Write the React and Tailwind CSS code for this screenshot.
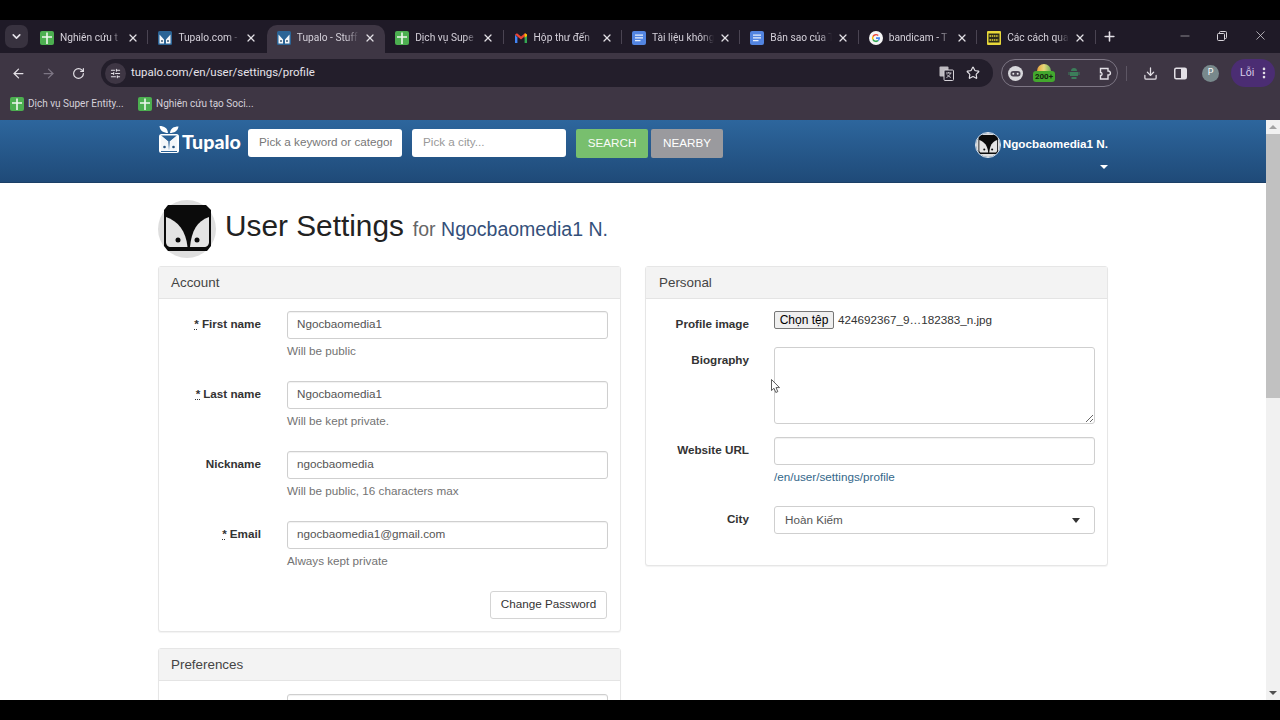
import { ArrowLeft, ArrowRight, RotateCw, Star, Download, MoreVertical, Plus, X, Minus, ChevronDown, SlidersHorizontal } from 'lucide-react'

const SheetIcon = () => (
  <svg width="14" height="14" viewBox="0 0 14 14" className="shrink-0">
    <rect width="14" height="14" rx="2" fill="#4caf50" />
    <path d="M2 5.200h4.200V1.500h1.600v3.700H12v1.500H7.800V13H6.200V6.700H2z" fill="#eef7ee" />
  </svg>
)

const TupaloIcon = () => (
  <svg width="14" height="14" viewBox="0 0 14 14" className="shrink-0">
    <rect width="14" height="14" rx="1.500" fill="#2b6496" />
    <path d="M1.500 3.500L6 8.500V12.500H1.500zM12.500 3.500L8 8.500V12.500H12.500z" fill="#f3f6f9" />
    <circle cx="4" cy="10" r="0.900" fill="#2b4a66" />
    <circle cx="10" cy="10" r="0.900" fill="#2b4a66" />
  </svg>
)

const GmailIcon = () => (
  <svg width="14" height="14" viewBox="0 0 14 14" className="shrink-0">
    <path d="M1 3.500V12h2.400V6.500z" fill="#4285f4" />
    <path d="M13 3.500V12h-2.400V6.500z" fill="#34a853" />
    <path d="M1 3.500L3 2.300 7 5.600 11 2.300 13 3.500 7 8.600z" fill="#ea4335" />
    <path d="M11 2.300L13 3.500V5L10.600 6.800V3z" fill="#fbbc04" />
  </svg>
)

const DocIcon = () => (
  <svg width="14" height="14" viewBox="0 0 14 14" className="shrink-0">
    <rect width="14" height="14" rx="2" fill="#5284e0" />
    <path d="M3 3.500h8v1.300H3zM3 6.200h8v1.300H3zM3 8.900h5.500v1.300H3z" fill="#e8effb" />
  </svg>
)

const GoogleIcon = () => (
  <svg width="14" height="14" viewBox="0 0 14 14" className="shrink-0">
    <circle cx="7" cy="7" r="7" fill="#f5f5f5" />
    <path d="M7 3a4 4 0 0 1 2.700 1L8.800 5a2.700 2.700 0 0 0-4.200 1L3.400 5A4 4 0 0 1 7 3z" fill="#ea4335" />
    <path d="M3.400 5l1.200 1a2.700 2.700 0 0 0 0 2L3.400 9a4 4 0 0 1 0-4z" fill="#fbbc04" />
    <path d="M3.400 9l1.200-1a2.700 2.700 0 0 0 4 1.100l1.100 1A4 4 0 0 1 3.400 9z" fill="#34a853" />
    <path d="M11 6.300V7.600a4 4 0 0 1-1.300 2.500l-1.100-1a2 2 0 0 0 .8-1.200H7V6.300z" fill="#4285f4" />
  </svg>
)

const ChoLonIcon = () => (
  <svg width="14" height="14" viewBox="0 0 14 14" className="shrink-0">
    <rect width="14" height="14" rx="1" fill="#e8d83a" />
    <rect x="1.500" y="2.500" width="11" height="9" fill="#2a2a1a" />
    <path d="M2.500 5h9M2.500 9h9" stroke="#e8d83a" strokeWidth="1.300" strokeDasharray="1.500 .7" />
  </svg>
)

const tabs = [
  { icon: SheetIcon, title: 'Nghiên cứu t' },
  { icon: TupaloIcon, title: 'Tupalo.com -' },
  { icon: TupaloIcon, title: 'Tupalo - Stuff', active: true },
  { icon: SheetIcon, title: 'Dịch vụ Supe' },
  { icon: GmailIcon, title: 'Hộp thư đến' },
  { icon: DocIcon, title: 'Tài liệu không' },
  { icon: DocIcon, title: 'Bản sao của T' },
  { icon: GoogleIcon, title: 'bandicam - T' },
  { icon: ChoLonIcon, title: 'Các cách qua' },
]

const Avatar = ({ size = 58 }) => (
  <svg width={size} height={size} viewBox="0 0 58 58" className="shrink-0">
    <circle cx="29" cy="29" r="29" fill="#dedede" />
    <path d="M10 5H48L53 10V46L49 51H10L6 46V10z" fill="#0b0b0b" />
    <path d="M8 17C20 21 28 31 29.500 47H13C10 47 8 45 8 42z" fill="#e4e4e4" />
    <path d="M51 17C39 21 33.500 31 32 47H46C49 47 51 45 51 42z" fill="#e4e4e4" />
    <circle cx="20" cy="40" r="2.500" fill="#0b0b0b" />
    <circle cx="39" cy="40" r="2.500" fill="#0b0b0b" />
  </svg>
)

const LogoMark = () => (
  <svg width="22" height="28" viewBox="0 0 22 28" className="shrink-0">
    <path d="M10 8C6 8 2 6 1.500 1c5 0 8 2 8.500 7zM12 8c4 0 8-2 8.500-6.500-5 0-8 2-8.500 6.500z" fill="#fff" />
    <rect x="1" y="9" width="20" height="19" rx="2.500" fill="#fff" />
    <path d="M3 10.500h16L11 17z" fill="#2a6196" />
    <path d="M3 10.500L10.300 17v9H3zM19 10.500L11.700 17v9H19z" fill="#f4f7fa" />
    <path d="M10.300 17L11 26 11.700 17 11 16zM3 26h16v1H3z" fill="#2a6196" />
    <circle cx="6.500" cy="22" r="1.300" fill="#24527f" />
    <circle cx="15.500" cy="22" r="1.300" fill="#24527f" />
  </svg>
)

const TextInput = ({ value }) => (
  <div className="h-[28px] w-[321px] border border-[#cfcfcf] rounded-[3px] bg-white px-[9px] pb-[2px] flex items-center text-[11.700px] text-[#555] shadow-[inset_0_1px_1px_rgba(0,0,0,0.06)]">
    {value}
  </div>
)

const Field = ({ label, required, wide, children, className = '' }) => (
  <div className={`flex items-start ${className}`}>
    <div className={`${wide ? 'w-[103px]' : 'w-[102px]'} shrink-0 text-right text-[11.700px] font-bold leading-[26px] text-[#333]`}>
      {required && <span className="underline decoration-dotted mr-[3px]">*</span>}
      {label}
    </div>
    <div className={wide ? 'ml-[25px]' : 'ml-[26px]'}>{children}</div>
  </div>
)

const Panel = ({ title, children, titleClass = 'px-[12px]', className = '' }) => (
  <div className={`w-[463px] border border-[#e6e6e6] rounded-[3px] bg-white shadow-[0_1px_1px_rgba(0,0,0,0.05)] ${className}`}>
    <div className={`h-[32px] bg-[#f3f3f3] border-b border-[#e4e4e4] pt-[2px] flex items-center text-[13.400px] text-[#444] ${titleClass}`}>
      {title}
    </div>
    {children}
  </div>
)

const accountFields = [
  { label: 'First name', required: true, value: 'Ngocbaomedia1', help: 'Will be public' },
  { label: 'Last name', required: true, value: 'Ngocbaomedia1', help: 'Will be kept private.' },
  { label: 'Nickname', value: 'ngocbaomedia', help: 'Will be public, 16 characters max' },
  { label: 'Email', required: true, value: 'ngocbaomedia1@gmail.com', help: 'Always kept private' },
]

function BrowserChrome() {
  return (
    <div className="font-['Roboto',sans-serif]">
      {/* tab strip */}
      <div className="h-[33px] bg-[#1f1a27] flex items-end relative">
        <div className="ml-[5px] mr-[2px] mb-[5px] w-[23px] h-[23px] rounded-[7px] bg-[#38323f] flex items-center justify-center">
          <ChevronDown size={13} strokeWidth={3} className="text-[#e6e3ea]" />
        </div>
        {tabs.map((tab, i) => {
          const Icon = tab.icon
          return (
            <div
              key={i}
              className={`w-[118.400px] h-[28px] pb-[2px] shrink-0 relative flex items-center pl-[10px] ${tab.active ? 'bg-[#3e3644] rounded-t-[10px]' : ''}`}
            >
              <Icon />
              <span className="ml-[6px] w-[62px] whitespace-nowrap text-[10.200px] text-[#d5d1da] [mask-image:linear-gradient(to_right,black_80%,transparent)]">
                {tab.title}
              </span>
              <X size={12} strokeWidth={2.500} className="absolute left-[97px] text-[#e3e0e6]" />
              {!tab.active && i !== 1 && <div className="absolute right-0 top-[5px] w-px h-[14px] bg-[#4a4452]" />}
            </div>
          )
        })}
        <Plus size={15} strokeWidth={2.500} className="ml-[6px] mb-[9px] text-[#e3e0e6]" />
        <div className="ml-auto flex items-center mb-[10px] text-[#d8d5db]">
          <Minus size={14} strokeWidth={1} className="mr-[25px]" />
          <svg width="10" height="10" viewBox="0 0 10 10" fill="none" stroke="currentColor" className="mr-[26px]">
            <rect x="0.500" y="2.500" width="7" height="7" rx="1" />
            <path d="M2.500 2.500V1.500a1 1 0 0 1 1-1h5a1 1 0 0 1 1 1v5a1 1 0 0 1-1 1H7.500" />
          </svg>
          <X size={15} strokeWidth={1.200} className="mr-[12px]" />
        </div>
      </div>

      {/* toolbar */}
      <div className="h-[34px] bg-[#3e3644] flex items-end text-[#e3e0e6]">
        <div className="h-[28px] flex items-center w-[101px] shrink-0">
          <ArrowLeft size={15} strokeWidth={2} className="ml-[11px]" />
          <ArrowRight size={15} strokeWidth={2} className="ml-[15px] text-[#7d7684]" />
          <RotateCw size={13} strokeWidth={2.200} className="ml-[16px]" />
        </div>
        <div className="w-[892px] h-[28px] rounded-full bg-[#231e2b] flex items-center shrink-0">
          <div className="ml-[4px] w-[21px] h-[21px] rounded-full bg-[#3e3644] flex items-center justify-center">
            <SlidersHorizontal size={11} strokeWidth={2.200} />
          </div>
          <span className="ml-[5px] text-[11.450px] text-[#e6e3ea]">tupalo.com/en/user/settings/profile</span>
          <div className="ml-auto flex items-center">
            <svg width="15" height="15" viewBox="0 0 15 15" className="mr-[12px]">
              <rect x="0.500" y="0.500" width="9" height="10" rx="1" fill="#bdbac0" />
              <rect x="5" y="4" width="9.500" height="10.500" rx="1" fill="#231e2b" stroke="#d6d3d9" />
              <path d="M7 7h5.500M9.700 6v1M11.500 7c-.5 2-2 3.500-4 4.500M8 8.500c1 1.300 2.200 2.300 3.800 3" stroke="#d6d3d9" strokeWidth=".9" fill="none" />
            </svg>
            <Star size={14} strokeWidth={2} className="mr-[13px]" />
          </div>
        </div>
        <div className="ml-[8px] w-[117px] h-[28px] rounded-full border border-[#7d7684] flex items-center relative">
          <svg width="15" height="15" viewBox="0 0 15 15" className="ml-[6px] shrink-0">
            <circle cx="7.500" cy="7.500" r="7.500" fill="#d8d8dc" />
            <rect x="2.500" y="5" width="10" height="5.500" rx="2.700" fill="#4a4452" />
            <circle cx="5.300" cy="7.700" r="1" fill="#e8e8ea" />
            <circle cx="9.700" cy="7.700" r="1" fill="#e8e8ea" />
          </svg>
          <div className="ml-[6px] w-[30px] relative flex flex-col items-center">
            <div className="w-[14px] h-[7px] rounded-t-full bg-[linear-gradient(90deg,#e8a33d,#e6d77a,#6fb05b)]" />
            <div className="w-[22px] h-[11px] rounded-[3px] bg-[#43a82e] text-[8px] leading-[11px] font-bold text-center text-[#14240f]">200+</div>
          </div>
          <svg width="12" height="13" viewBox="0 0 12 13" className="ml-[9px]" fill="#3c7d5a">
            <path d="M3 4a3 3 0 0 1 6 0zM2 5h8v4H2zM3.500 10h5v2h-5zM0.500 5h1v3h-1zM10.500 5h1v3h-1z" />
          </svg>
          <svg width="15" height="15" viewBox="0 0 15 15" fill="none" stroke="#e3e0e6" strokeWidth="1.400" className="ml-[19px]">
            <path d="M1.500 2.500h7.500v2.500c3-.5 3.500 4.500 0 4v4h-7.500v-3.500c2 .5 2-3.500 0-3z" />
          </svg>
        </div>
        <div className="h-[28px] flex items-center">
          <div className="ml-[8px] w-px h-[15px] bg-[#5d5664]" />
          <Download size={15} strokeWidth={2} className="ml-[16px]" />
          <svg width="13" height="13" viewBox="0 0 13 13" className="ml-[16px]">
            <rect x="0.750" y="1.250" width="11.500" height="10.500" rx="1.500" fill="none" stroke="#e3e0e6" strokeWidth="1.500" />
            <rect x="7" y="1.500" width="5" height="10" fill="#e3e0e6" />
          </svg>
          <div className="ml-[15px] w-[17px] h-[17px] rounded-full bg-[#78898c] text-[9px] text-white flex items-center justify-center">P</div>
          <div className="ml-[12px] w-[44px] h-[28px] rounded-full bg-[#4b2d73] flex items-center pl-[9px] text-[10.500px] text-[#d7cce8]">
            Lỗi
            <MoreVertical size={14} strokeWidth={2.500} className="ml-[3px] text-[#e3e0e6]" />
          </div>
        </div>
      </div>

      {/* bookmarks */}
      <div className="h-[33px] bg-[#3e3644] flex items-center pl-[10px] gap-[5px] text-[10px] text-[#d5d1da]">
        <div className="flex items-center gap-[4px] w-[123px]">
          <SheetIcon />
          <span className="whitespace-nowrap">Dịch vụ Super Entity...</span>
        </div>
        <div className="flex items-center gap-[4px]">
          <SheetIcon />
          <span className="whitespace-nowrap">Nghiên cứu tạo Soci...</span>
        </div>
      </div>
    </div>
  )
}

function SiteHeader() {
  return (
    <div className="h-[63px] bg-[linear-gradient(#2d669d,#1f4a78)] border-b border-[#1b3f66] px-[158px] flex items-start relative">
      <div className="mt-[5px] flex items-center w-[90px]">
        <LogoMark />
        <span className="ml-[2px] font-['Lato',sans-serif] font-black text-[19.600px] text-white leading-none mt-[6px]">Tupalo</span>
      </div>
      <div className="mt-[9px] w-[154px] h-[28px] rounded-[3px] bg-white flex items-center pl-[11px] pr-[10px] pb-[2px] text-[11.700px] text-[#777]">
        <span className="whitespace-nowrap overflow-hidden">Pick a keyword or categor</span>
      </div>
      <div className="mt-[9px] ml-[10px] w-[154px] h-[28px] rounded-[3px] bg-white flex items-center pl-[11px] pb-[2px] text-[11.700px] text-[#999]">
        Pick a city...
      </div>
      <div className="mt-[9px] ml-[10px] w-[72px] h-[29px] rounded-[2px] bg-[#78bf6e] flex items-center justify-center pb-[2px] text-[11.700px] text-[#f8fbf7]">SEARCH</div>
      <div className="mt-[9px] ml-[3px] w-[72px] h-[29px] rounded-[2px] bg-[#9a9a9e] flex items-center justify-center pb-[2px] text-[11.700px] text-white">NEARBY</div>
      <div className="ml-auto mt-[12px] w-[133px] flex flex-col">
        <div className="flex items-center">
          <div className="rounded-full overflow-hidden border border-[#dfe6ee]">
            <Avatar size={24} />
          </div>
          <span className="ml-[2px] pb-[2px] text-[11.700px] font-bold text-white whitespace-nowrap">Ngocbaomedia1 N.</span>
        </div>
        <div className="self-end mr-0 mt-[7px] w-0 h-0 border-x-[4px] border-x-transparent border-t-[4px] border-t-white" />
      </div>
    </div>
  )
}

function AccountColumn() {
  return (
    <div className="w-[463px]">
      <Panel title="Account">
        <div className="pt-[12px] pb-[12px] pr-[13px]">
          {accountFields.map((f) => (
            <Field key={f.label} label={f.label} required={f.required} className="h-[70px]">
              <TextInput value={f.value} />
              <div className="mt-[3px] text-[11.700px] text-[#737373]">{f.help}</div>
            </Field>
          ))}
          <div className="flex justify-end">
            <div className="h-[28px] w-[117px] border border-[#d4d4d4] rounded-[3px] pb-[2px] flex items-center justify-center text-[11.700px] text-[#333]">
              Change Password
            </div>
          </div>
        </div>
      </Panel>
      <Panel title="Preferences" className="mt-[16px]">
        <div className="pt-[13px] ml-[128px]">
          <TextInput value="" />
        </div>
      </Panel>
    </div>
  )
}

function PersonalColumn() {
  return (
    <Panel title="Personal" titleClass="px-[13px]" className="h-[300px]">
      <div className="pt-[12px]">
        <Field label="Profile image" wide className="h-[36px]">
          <div className="flex items-center h-[18px] text-[11.700px] text-[#333]">
            <div className="w-[60px] h-[18px] bg-[#efefef] border border-[#767676] rounded-[2px] flex items-center justify-center text-black text-[12px]">Chọn tệp</div>
            <span className="ml-[4px]">424692367_9…182383_n.jpg</span>
          </div>
        </Field>
        <Field label="Biography" wide className="h-[90px]">
          <textarea readOnly className="block w-[321px] h-[77px] border border-[#cfcfcf] rounded-[3px] bg-white" />
        </Field>
        <Field label="Website URL" wide className="h-[69px]">
          <TextInput value="" />
          <div className="mt-[3px] text-[11.700px] text-[#34678a]">/en/user/settings/profile</div>
        </Field>
        <Field label="City" wide>
          <div className="h-[28px] w-[321px] border border-[#cfcfcf] rounded-[3px] bg-white pl-[10px] pr-[14px] flex items-center justify-between text-[11.700px] text-[#555]">
            Hoàn Kiếm
            <div className="w-0 h-0 border-x-[4.500px] border-x-transparent border-t-[5px] border-t-[#333]" />
          </div>
        </Field>
      </div>
    </Panel>
  )
}

export default function App() {
  return (
    <div className="w-[1280px] h-[720px] bg-black overflow-hidden relative font-['Liberation_Sans',Arial,sans-serif]">
      <div className="h-[20px]" />
      <BrowserChrome />
      <div className="h-[580px] flex overflow-hidden bg-white">
        <div className="flex-1 min-w-0 overflow-hidden">
          <SiteHeader />
          <div className="pl-[158px]">
            <div className="flex items-center h-[83px] pt-[17px] pb-[8px]">
              <Avatar />
              <span className="ml-[9px] text-[29.800px] text-[#222] leading-none whitespace-nowrap mb-[6px]">User Settings</span>
              <span className="ml-[9px] mt-[2px] text-[19.500px] text-[#666] leading-none whitespace-nowrap">for <span className="text-[#34507a]">Ngocbaomedia1 N.</span></span>
            </div>
            <div className="flex gap-[24px] items-start">
              <AccountColumn />
              <PersonalColumn />
            </div>
          </div>
        </div>
        {/* page scrollbar */}
        <div className="w-[14px] shrink-0 bg-[#f1f1f1] flex flex-col items-center">
          <div className="h-[14px] flex items-center justify-center">
            <div className="w-0 h-0 border-x-[4px] border-x-transparent border-b-[4px] border-b-[#a3a3a3]" />
          </div>
          <div className="w-full h-[264px] bg-[#c1c1c1]" />
          <div className="mt-auto h-[14px] flex items-center justify-center">
            <div className="w-0 h-0 border-x-[4px] border-x-transparent border-t-[4px] border-t-[#505050]" />
          </div>
        </div>
      </div>
      {/* mouse pointer */}
      <svg width="10" height="15" viewBox="0 0 10 15" className="absolute left-[771px] top-[379px]">
        <path d="M.500.500V11.500L3 9.300 4.800 13.500 6.800 12.600 5 8.600H8.500z" fill="#fff" stroke="#333" strokeWidth=".8" />
      </svg>
    </div>
  )
}
